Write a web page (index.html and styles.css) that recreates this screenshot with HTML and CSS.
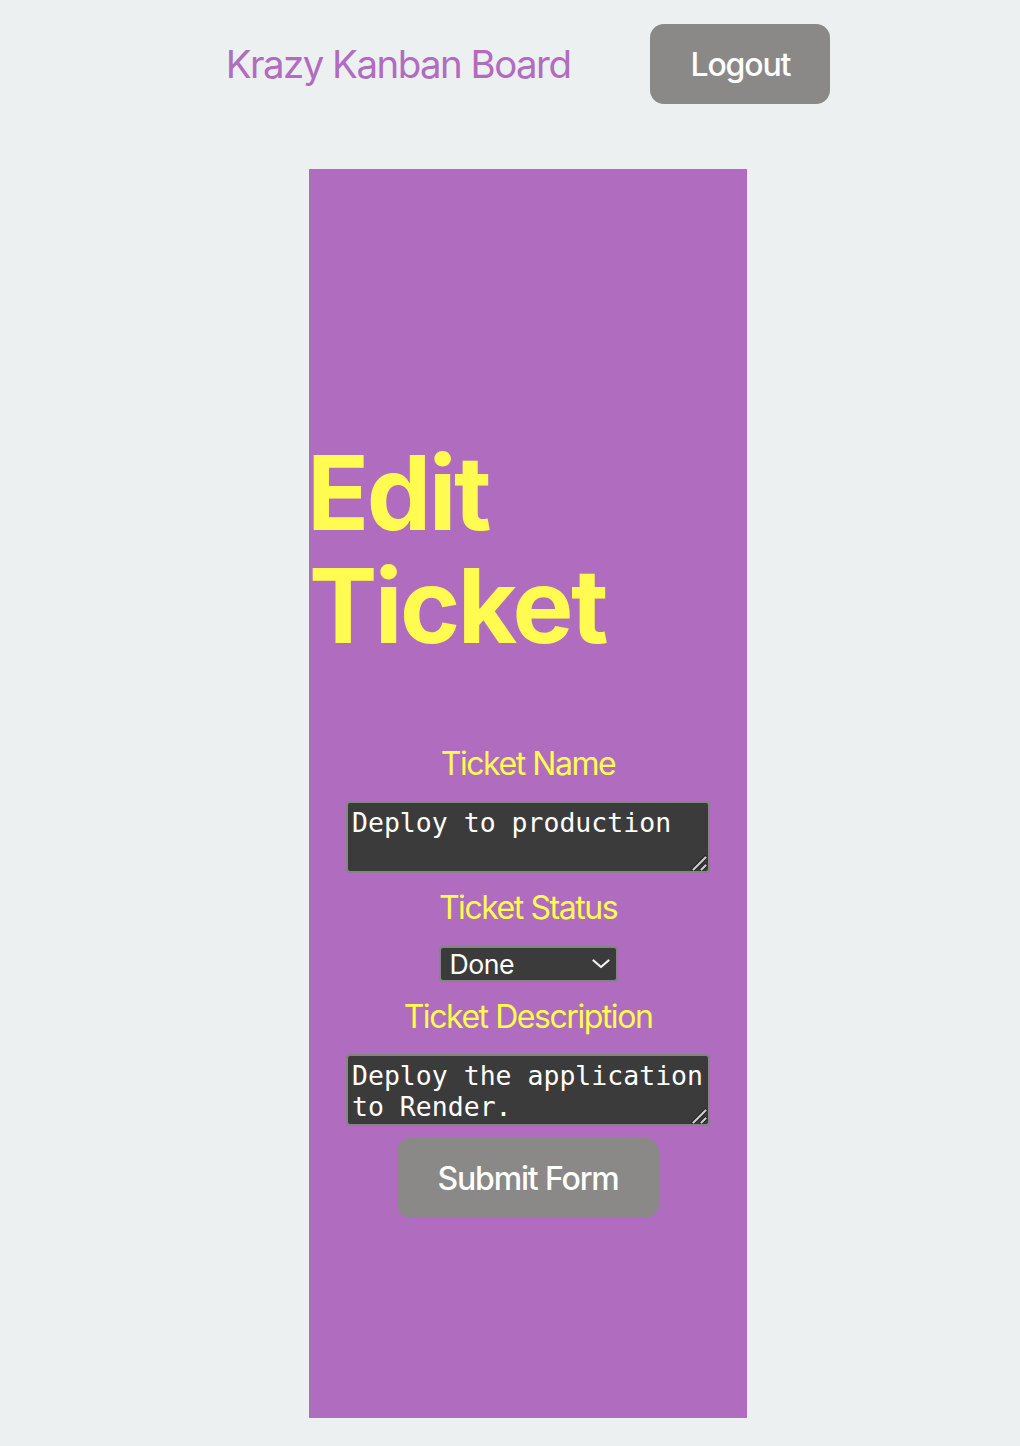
FILE: index.html
```html
<!DOCTYPE html>
<html lang="en">
<head>
<meta charset="utf-8">
<title>Krazy Kanban Board</title>
<link rel="stylesheet" href="styles.css">
</head>
<body>
<div class="page">
  <header class="topbar">
    <h2 class="brand">Krazy Kanban Board</h2>
    <button class="btn" type="button">Logout</button>
  </header>
  <main class="panel">
    <h1 class="title">Edit Ticket</h1>
    <form class="ticket-form">
      <label class="field-label" for="tName">Ticket Name</label>
      <div class="text-wrap">
        <textarea id="tName" class="field-text">Deploy to production</textarea>
        <svg class="grip" width="16" height="16" viewBox="0 0 16 16" aria-hidden="true">
          <path d="M2.5 14.5 L14.5 2.5" stroke="#222222" stroke-width="4.2" stroke-linecap="round"/>
          <path d="M10.5 14.5 L14.5 10.5" stroke="#222222" stroke-width="4.2" stroke-linecap="round"/>
          <path d="M2.5 14.5 L14.5 2.5" stroke="#cfcfcf" stroke-width="2.2" stroke-linecap="round"/>
          <path d="M10.5 14.5 L14.5 10.5" stroke="#cfcfcf" stroke-width="2.2" stroke-linecap="round"/>
        </svg>
      </div>
      <label class="field-label" for="tStatus">Ticket Status</label>
      <div class="select-wrap">
        <select id="tStatus" class="field-select">
          <option>Todo</option>
          <option>In Progress</option>
          <option selected>Done</option>
        </select>
        <svg class="chevron" width="18" height="10" viewBox="0 0 18 10" aria-hidden="true">
          <path d="M1.5 1.5 L9 8 L16.5 1.5" fill="none" stroke="#f2f2f2" stroke-width="2.2" stroke-linecap="round" stroke-linejoin="round"/>
        </svg>
      </div>
      <label class="field-label" for="tDesc">Ticket Description</label>
      <div class="text-wrap">
        <textarea id="tDesc" class="field-text">Deploy the application to Render.</textarea>
        <svg class="grip" width="16" height="16" viewBox="0 0 16 16" aria-hidden="true">
          <path d="M2.5 14.5 L14.5 2.5" stroke="#222222" stroke-width="4.2" stroke-linecap="round"/>
          <path d="M10.5 14.5 L14.5 10.5" stroke="#222222" stroke-width="4.2" stroke-linecap="round"/>
          <path d="M2.5 14.5 L14.5 2.5" stroke="#cfcfcf" stroke-width="2.2" stroke-linecap="round"/>
          <path d="M10.5 14.5 L14.5 10.5" stroke="#cfcfcf" stroke-width="2.2" stroke-linecap="round"/>
        </svg>
      </div>
      <button class="btn submit" type="submit">Submit Form</button>
    </form>
  </main>
</div>
</body>
</html>
```
FILE: styles.css
```css
html, body {
  margin: 0;
  padding: 0;
}
body {
  background: #ecf0f1;
  font-family: Inter, "Noto Sans", sans-serif;
  font-size: 32px;
  line-height: 1.5;
  color: #ffffff;
}
.page {
  padding: 24px 0 28px 36px;
}
.topbar {
  display: flex;
  justify-content: center;
  align-items: center;
  gap: 80px;
}
.brand {
  margin: 0;
  font-size: 38.4px;
  font-weight: 400;
  letter-spacing: -1.5px;
  color: #b06cbe;
  line-height: 1.2;
}
.btn {
  height: 80px;
  padding: 0 38px;
  border: 2px solid transparent;
  border-radius: 14px;
  background: #8a8987;
  color: #ffffff;
  font-family: Inter, "Noto Sans", sans-serif;
  font-size: 32px;
  font-weight: 500;
  letter-spacing: -1.15px;
  line-height: normal;
  cursor: pointer;
}
.panel {
  box-sizing: border-box;
  width: 438px;
  height: 1249px;
  margin: 65px auto 0;
  padding-top: 268px;
  background: #b06cbe;
}
.title {
  margin: 0 0 78px;
  font-size: 102.4px;
  line-height: 1.1;
  font-weight: 700;
  letter-spacing: -2.5px;
  color: #fffb50;
  text-align: left;
  text-indent: -2px;
}
.ticket-form {
  display: flex;
  flex-direction: column;
  align-items: center;
}
.field-label {
  display: block;
  margin-top: 11px;
  font-size: 32px;
  line-height: 48px;
  letter-spacing: -1.45px;
  color: #fffb50;
  font-weight: 400;
}
.field-label:first-child {
  margin-top: 0;
}
.text-wrap {
  position: relative;
  margin-top: 13px;
}
.field-text {
  box-sizing: border-box;
  display: block;
  width: 364px;
  height: 72px;
  margin: 0;
  padding: 4px 2px 4px 4px;
  border: 2px solid #858585;
  border-radius: 4px;
  background: #3b3b3b;
  color: #ffffff;
  font-family: "DejaVu Sans Mono", monospace;
  font-size: 26.5px;
  line-height: 31px;
  resize: none;
  overflow: hidden;
}
.grip {
  position: absolute;
  right: 3px;
  bottom: 2px;
}
.select-wrap {
  position: relative;
  margin-top: 14px;
}
.field-select {
  -webkit-appearance: none;
  appearance: none;
  box-sizing: border-box;
  display: block;
  width: 179px;
  height: 36px;
  margin: 0;
  padding: 0 0 0 9px;
  border: 2px solid #858585;
  border-radius: 4px;
  background-color: #3b3b3b;
  color: #ffffff;
  font-family: Inter, "Noto Sans", sans-serif;
  font-size: 26.67px;
  letter-spacing: -0.5px;
}
.chevron {
  position: absolute;
  right: 8px;
  top: 13px;
  pointer-events: none;
}
.submit {
  margin-top: 12px;
}
```
